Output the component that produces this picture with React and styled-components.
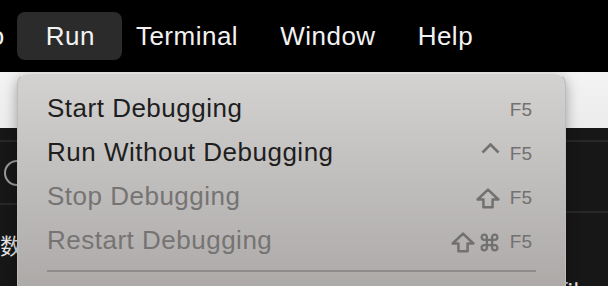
import styled, { createGlobalStyle } from "styled-components";

const GlobalStyle = createGlobalStyle`
  html, body {
    margin: 0;
    padding: 0;
    width: 608px;
    height: 286px;
    overflow: hidden;
    background: #171717;
    font-family: "Liberation Sans", Arial, sans-serif;
  }
`;

const Screen = styled.div`
  position: relative;
  width: 608px;
  height: 286px;
  overflow: hidden;
  display: flex;
  flex-direction: column;
`;

const MenuBar = styled.div`
  height: 72px;
  flex-shrink: 0;
  background: #000;
  display: flex;
  align-items: center;
`;

const BarItem = styled.div`
  height: 48px;
  line-height: 48px;
  padding: 0 21px;
  font-size: 26px;
  letter-spacing: 0.5px;
  color: #f2f2f2;
  border-radius: 8px;
  white-space: nowrap;
  ${(p) =>
    p.$active &&
    `
    background: #2b2b2b;
    padding: 0 27px 0 29px;
    margin-right: -7px;
  `}
  ${(p) =>
    p.$clipped &&
    `
    margin-left: -31px;
    padding: 0 12px 0 0;
  `}
`;

const Toolbar = styled.div`
  height: 56px;
  flex-shrink: 0;
  background: linear-gradient(180deg, #f3f3f3, #ececec);
`;

const Panes = styled.div`
  flex: 1;
  display: flex;
  background: #171717;
`;

const Pane = styled.div`
  flex: ${(p) => (p.$wide ? 1 : "0 0 300px")};
  display: flex;
  flex-direction: column;
`;

const PaneRow = styled.div`
  height: ${(p) => p.$h}px;
  flex-shrink: 0;
  border-bottom: 2px solid #282828;
  display: flex;
  align-items: center;
`;

const PaneText = styled.div`
  color: #e6e6e6;
  font-size: 22px;
  line-height: 30px;
  font-family: "Noto Sans CJK SC", "Liberation Sans", sans-serif;
  padding: ${(p) => p.$pad || "0"};
`;

const Dropdown = styled.div`
  position: absolute;
  left: 17px;
  top: 73px;
  width: 549px;
  height: 240px;
  box-sizing: border-box;
  padding: 12px 33px 0 29px;
  border-radius: 11px;
  background: linear-gradient(180deg, #d3d2d1 0%, #c0bebd 45%, #a8a5a3 100%);
  border: 1px solid #bdbcbb;
  border-top-color: #e2e1e0;
  box-shadow: 0 4px 14px rgba(0, 0, 0, 0.35);
`;

const Row = styled.div`
  height: 44px;
  display: flex;
  align-items: center;
  justify-content: space-between;
`;

const Label = styled.span`
  font-size: 26px;
  letter-spacing: 0.5px;
  color: ${(p) => (p.$disabled ? "#767473" : "#1e1e1e")};
  line-height: 44px;
`;

const Keys = styled.span`
  display: flex;
  align-items: center;
  gap: 4px;
  color: #727070;
  font-size: 19px;
  padding-top: 4px;
`;

const KeyName = styled.span`
  margin-left: 6px;
  line-height: 20px;
`;

const Separator = styled.div`
  height: 2px;
  background: #8e8c8b;
  margin: 8px -4px 0 0;
`;

const Caret = () => (
  <svg width="19" height="11" viewBox="0 0 19 11" style={{ marginTop: -12 }}>
    <polyline points="1.5,9.5 9.5,1.5 17.5,9.5" fill="none" stroke="#727070" strokeWidth="2.6" />
  </svg>
);

const Shift = () => (
  <svg width="24" height="21" viewBox="0 0 24 21">
    <path d="M12 1.6 L22.4 11.5 H16.6 V19.3 H7.4 V11.5 H1.6 Z" fill="none" stroke="#727070" strokeWidth="2.5" strokeLinejoin="round" />
  </svg>
);

const Command = () => (
  <svg width="21" height="21" viewBox="0 0 24 24">
    <path
      d="M15 6v12a3 3 0 1 0 3-3H6a3 3 0 1 0 3 3V6a3 3 0 1 0-3 3h12a3 3 0 1 0-3-3"
      fill="none"
      stroke="#727070"
      strokeWidth="2.6"
    />
  </svg>
);

const ClockIcon = styled.div`
  width: 22px;
  height: 22px;
  border: 2px solid #9a9a9a;
  border-radius: 50%;
  margin-left: 4px;
`;

const items = [
  { label: "Start Debugging", keys: [] },
  { label: "Run Without Debugging", keys: [<Caret key="c" />] },
  { label: "Stop Debugging", disabled: true, keys: [<Shift key="s" />] },
  { label: "Restart Debugging", disabled: true, keys: [<Shift key="s" />, <Command key="m" />] },
];

export default function App() {
  return (
    <>
      <GlobalStyle />
      <Screen>
        <MenuBar>
          <BarItem $clipped>Go</BarItem>
          <BarItem $active>Run</BarItem>
          <BarItem>Terminal</BarItem>
          <BarItem>Window</BarItem>
          <BarItem>Help</BarItem>
        </MenuBar>
        <Toolbar />
        <Panes>
          <Pane>
            <PaneRow $h={12} />
            <PaneRow $h={61}>
              <ClockIcon />
            </PaneRow>
            <PaneText $pad="24px 0 0 0">数据</PaneText>
          </Pane>
          <Pane $wide>
            <PaneRow $h={12} />
            <PaneRow $h={69} />
            <PaneText $pad="62px 0 0 260px">file</PaneText>
          </Pane>
        </Panes>
        <Dropdown>
          {items.map((it) => (
            <Row key={it.label}>
              <Label $disabled={it.disabled}>{it.label}</Label>
              <Keys>
                {it.keys}
                <KeyName>F5</KeyName>
              </Keys>
            </Row>
          ))}
          <Separator />
        </Dropdown>
      </Screen>
    </>
  );
}
